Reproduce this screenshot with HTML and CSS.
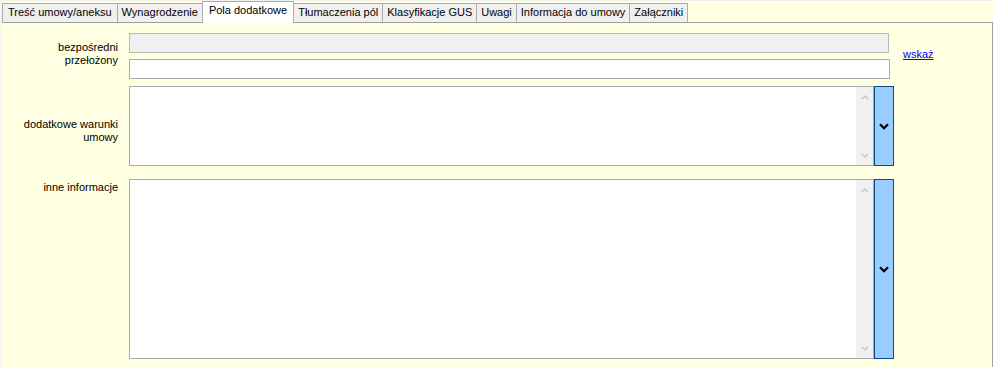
FILE: index.html
```html
<!DOCTYPE html>
<html lang="pl">
<head>
    <meta charset="UTF-8">
    <meta name="viewport" content="width=device-width, initial-scale=1.0">
    <title>Pola dodatkowe</title>
    <link rel="stylesheet" href="styles.css">
</head>
<body>
    <div class="window">
        <ul class="tabs">
            <li class="tab">Treść umowy/aneksu</li>
            <li class="tab">Wynagrodzenie</li>
            <li class="tab active">Pola dodatkowe</li>
            <li class="tab">Tłumaczenia pól</li>
            <li class="tab">Klasyfikacje GUS</li>
            <li class="tab">Uwagi</li>
            <li class="tab">Informacja do umowy</li>
            <li class="tab">Załączniki</li>
        </ul>

        <div class="panel">
            <div class="row row-person">
                <label class="caption caption-person">bezpośredni<br>przełożony</label>
                <div class="fields">
                    <input type="text" class="field field-disabled" disabled>
                    <input type="text" class="field">
                </div>
                <a href="#" class="pick">wskaż</a>
            </div>

            <div class="row row-terms">
                <label class="caption caption-terms">dodatkowe warunki<br>umowy</label>
                <div class="memo memo-short">
                    <textarea></textarea>
                    <div class="scroll">
                        <svg width="8" height="5" viewBox="0 0 8 5"><path d="M0.8 4.2 L4 1 L7.2 4.2" fill="none" stroke="#c6c6c6" stroke-width="1.4"/></svg>
                        <svg width="8" height="5" viewBox="0 0 8 5"><path d="M0.8 0.8 L4 4 L7.2 0.8" fill="none" stroke="#c6c6c6" stroke-width="1.4"/></svg>
                    </div>
                </div>
                <button class="expand">
                    <svg width="10" height="7" viewBox="0 0 10 7"><path d="M1 1.2 L5 5.2 L9 1.2" fill="none" stroke="#000" stroke-width="2.2"/></svg>
                </button>
            </div>

            <div class="row row-other">
                <label class="caption caption-other">inne informacje</label>
                <div class="memo memo-tall">
                    <textarea></textarea>
                    <div class="scroll">
                        <svg width="8" height="5" viewBox="0 0 8 5"><path d="M0.8 4.2 L4 1 L7.2 4.2" fill="none" stroke="#c6c6c6" stroke-width="1.4"/></svg>
                        <svg width="8" height="5" viewBox="0 0 8 5"><path d="M0.8 0.8 L4 4 L7.2 0.8" fill="none" stroke="#c6c6c6" stroke-width="1.4"/></svg>
                    </div>
                </div>
                <button class="expand">
                    <svg width="10" height="7" viewBox="0 0 10 7"><path d="M1 1.2 L5 5.2 L9 1.2" fill="none" stroke="#000" stroke-width="2.2"/></svg>
                </button>
            </div>
        </div>
    </div>
</body>
</html>
```

FILE: styles.css
```css
* {
    box-sizing: border-box;
    margin: 0;
    padding: 0;
    font-family: "Liberation Sans", Arial, sans-serif;
}

body {
    background-color: #ffffe1;
    font-size: 11px;
    line-height: 13px;
    color: #000;
    overflow: hidden;
}

.window {
    width: 993px;
    height: 367px;
    border-top: 1px solid #f0f0f0;
    border-left: 2px solid #f8f8f2;
}

/* tab strip */
.tabs {
    list-style: none;
    display: flex;
    align-items: flex-end;
    height: 21px;
}

.tab {
    height: 19px;
    padding: 2px 4px 0;
    background: #f0f0f0;
    border: 1px solid #acacac;
    border-bottom: none;
    border-left: none;
    white-space: nowrap;
}

.tab:first-child {
    padding: 2px 5px 0;
    border-left: 1px solid #acacac;
}

.tab.active {
    position: relative;
    z-index: 1;
    height: 22px;
    margin-bottom: -1px;
    margin-left: -1px;
    padding: 2px 6px 0;
    background: #fff;
    border-left: 1px solid #acacac;
}

/* panel */
.panel {
    height: 345px;
    padding-top: 10px;
    border-top: 1px solid #a0a0a0;
    border-right: 1px solid #a0a0a0;
    display: flex;
    flex-direction: column;
}

.row {
    display: flex;
    align-items: flex-start;
}

.caption {
    width: 116px;
    margin-right: 11px;
    text-align: right;
}

.caption-person {
    padding-top: 8px;
}

.caption-terms {
    padding-top: 32px;
}

.caption-other {
    padding-top: 2px;
}

.fields {
    display: flex;
    flex-direction: column;
    gap: 6px;
}

.field {
    width: 761px;
    height: 20px;
    border: 1px solid #ababab;
    background: #fff;
    font-size: 11px;
    padding: 0 3px;
}

.field-disabled {
    width: 760px;
    background: #f0f0f0;
    border-color: #b9b9b9;
}

.pick {
    margin-left: 13px;
    padding-top: 15px;
    color: #0000ff;
    text-decoration: underline;
}

.row-terms {
    margin-top: 7px;
}

.row-other {
    margin-top: 13px;
}

.memo {
    width: 745px;
    display: flex;
    border: 1px solid #ababab;
    background: #fff;
}

.memo-short {
    height: 80px;
}

.memo-tall {
    height: 180px;
}

.memo textarea {
    flex: 1;
    border: none;
    resize: none;
    outline: none;
    overflow: hidden;
    background: #fff;
    font-size: 11px;
    padding: 2px 3px;
}

.scroll {
    width: 17px;
    background: #f0f0f0;
    display: flex;
    flex-direction: column;
    align-items: center;
    justify-content: space-between;
    padding: 8px 0 7px;
}

.scroll svg {
    display: block;
}

.expand {
    width: 20px;
    align-self: stretch;
    background-color: #99ccff;
    border: 1px solid #0c4a8c;
    display: flex;
    align-items: center;
    justify-content: center;
    cursor: pointer;
}

.expand svg {
    display: block;
}
```
